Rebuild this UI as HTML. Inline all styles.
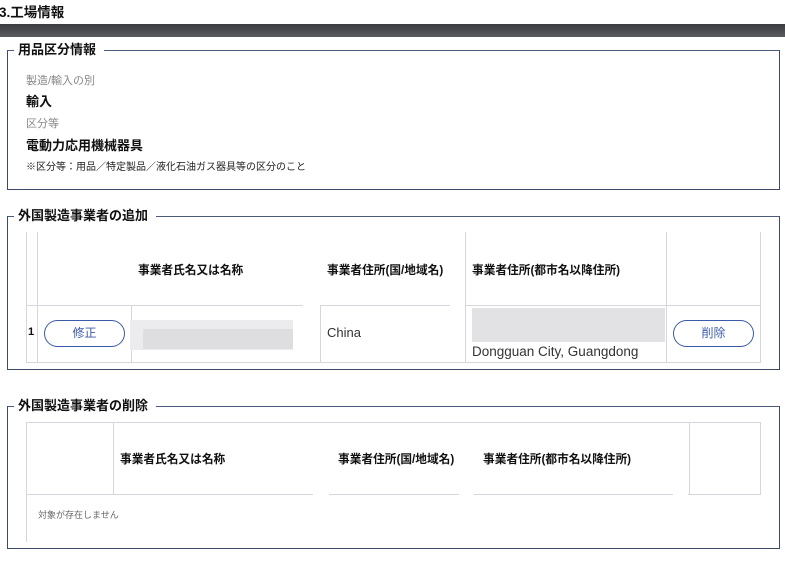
<!DOCTYPE html><html><head><meta charset="utf-8"><style>
*{margin:0;padding:0;box-sizing:border-box}
body{width:785px;height:564px;background:#fff;position:relative;overflow:hidden;font-family:"Liberation Sans","Noto Sans CJK JP",sans-serif;color:#111}
.a{position:absolute;white-space:nowrap}
.box{position:absolute;border:1px solid #3d4a66;border-top-color:#4a5a7a}
.lg{position:absolute;background:#fff;font-weight:bold;font-size:13px;padding:0 8px 0 4px;line-height:16px}
.v{position:absolute;width:1px;background:#d4d7dc}
.h{position:absolute;height:1px;background:#d4d7dc}
.th{position:absolute;font-size:11.7px;font-weight:bold;white-space:nowrap}
.btn{position:absolute;border:1px solid #3b5aa8;border-radius:14px;color:#3b5aa8;font-size:12px;text-align:center;line-height:24px;background:#fff}
.blur{position:absolute;background:#e4e4e6}
</style></head><body>
<div class="a" style="left:-1px;top:1px;font-size:13.5px;font-weight:bold">3.工場情報</div>
<div class="a" style="left:0;top:24px;width:785px;height:13px;background:linear-gradient(#3a3c3f,#5a5c5f)"></div>

<div class="box" style="left:7px;top:50px;width:773px;height:140px"></div>
<div class="lg" style="left:14px;top:42px">用品区分情報</div>
<div class="a" style="left:26px;top:72px;font-size:11px;color:#888">製造/輸入の別</div>
<div class="a" style="left:26px;top:91px;font-size:13px;font-weight:bold">輸入</div>
<div class="a" style="left:26px;top:115px;font-size:11px;color:#888">区分等</div>
<div class="a" style="left:26px;top:135px;font-size:13px;font-weight:bold">電動力応用機械器具</div>
<div class="a" style="left:26px;top:158px;font-size:10px;color:#222">※区分等：用品／特定製品／液化石油ガス器具等の区分のこと</div>

<div class="box" style="left:7px;top:216px;width:773px;height:154px"></div>
<div class="lg" style="left:14px;top:208px">外国製造事業者の追加</div>
<div class="v" style="left:26px;top:232px;height:131px"></div>
<div class="v" style="left:37px;top:232px;height:131px"></div>
<div class="v" style="left:131px;top:305px;height:58px"></div>
<div class="v" style="left:320px;top:305px;height:58px"></div>
<div class="v" style="left:465px;top:232px;height:131px"></div>
<div class="v" style="left:666px;top:232px;height:131px"></div>
<div class="v" style="left:760px;top:232px;height:131px"></div>
<div class="h" style="left:26px;top:305px;width:277px"></div>
<div class="h" style="left:320px;top:305px;width:130px"></div>
<div class="h" style="left:465px;top:305px;width:296px"></div>
<div class="h" style="left:26px;top:362px;width:735px"></div>
<div class="th" style="left:138px;top:261px">事業者氏名又は名称</div>
<div class="th" style="left:327px;top:261px">事業者住所(国/地域名)</div>
<div class="th" style="left:472px;top:261px">事業者住所(都市名以降住所)</div>
<div class="a" style="left:28px;top:326px;font-size:11px;font-weight:bold">1</div>
<div class="btn" style="left:44px;top:320px;width:81px;height:27px">修正</div>
<div class="blur" style="left:130px;top:320px;width:163px;height:30px;background:#ececee"></div>
<div class="blur" style="left:143px;top:329px;width:150px;height:20px;background:#dedee0"></div>
<div class="a" style="left:327px;top:325px;font-size:13px;color:#333">China</div>
<div class="blur" style="left:472px;top:308px;width:193px;height:34px;background:#e2e2e4"></div>
<div class="a" style="left:472px;top:344px;font-size:13.5px;color:#333">Dongguan City, Guangdong</div>
<div class="btn" style="left:673px;top:320px;width:81px;height:27px">削除</div>

<div class="box" style="left:7px;top:406px;width:773px;height:143px"></div>
<div class="lg" style="left:14px;top:398px">外国製造事業者の削除</div>
<div class="v" style="left:26px;top:422px;height:120px"></div>
<div class="v" style="left:113px;top:422px;height:72px"></div>
<div class="v" style="left:689px;top:422px;height:72px"></div>
<div class="v" style="left:760px;top:422px;height:72px"></div>
<div class="h" style="left:26px;top:422px;width:735px"></div>
<div class="h" style="left:26px;top:494px;width:287px"></div>
<div class="h" style="left:329px;top:494px;width:130px"></div>
<div class="h" style="left:474px;top:494px;width:199px"></div>
<div class="h" style="left:688px;top:494px;width:73px"></div>
<div class="th" style="left:120px;top:450px">事業者氏名又は名称</div>
<div class="th" style="left:338px;top:450px">事業者住所(国/地域名)</div>
<div class="th" style="left:483px;top:450px">事業者住所(都市名以降住所)</div>
<div class="a" style="left:38px;top:508px;font-size:9px;color:#666">対象が存在しません</div>
</body></html>
